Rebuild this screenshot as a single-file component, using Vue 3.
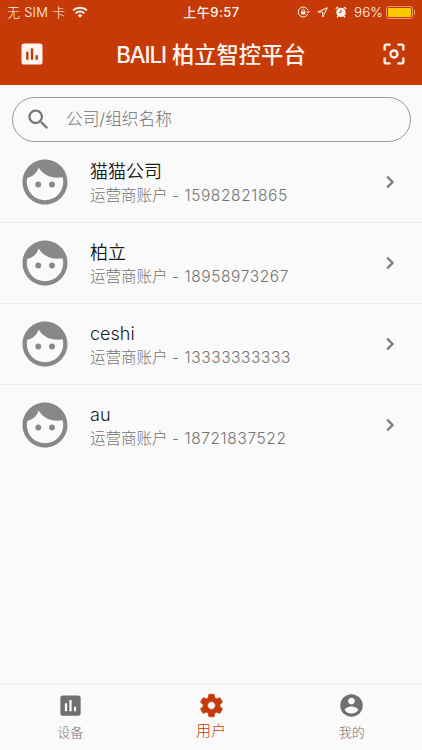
<template>
  <div class="page">
    <header class="header">
      <div class="status-bar">
        <div class="status-left">
          <span class="carrier">无 SIM 卡</span>
          <svg class="wifi" viewBox="0 0 16 12">
            <path d="M8 11.8L5.8 9.4a3.2 3.2 0 0 1 4.4 0z" fill="currentColor" />
            <path d="M3.7 7.2a6.2 6.2 0 0 1 8.6 0M1.1 4.4a10 10 0 0 1 13.8 0" fill="none" stroke="currentColor" stroke-width="2" />
          </svg>
        </div>
        <span class="time">上午9:57</span>
        <div class="status-right">
          <svg class="lock" viewBox="0 0 13 12" fill="none" stroke="currentColor">
            <path d="M10.9 7.8A5 5 0 1 1 11 4.5M9.6 5.2l1.6 1.7 1.5-1.7" />
            <path d="M5 5.6V4.4a1.2 1.2 0 0 1 2.4 0v1.2" stroke-width=".8" />
            <path d="M4 5.4h4.4v3H4z" fill="currentColor" stroke="none" />
          </svg>
          <svg class="location" viewBox="0 0 11 11" fill="none" stroke="currentColor">
            <path d="M10.3 .7L.8 5h4.9v5z" stroke-linejoin="round" />
          </svg>
          <svg class="alarm" viewBox="0 0 12 12">
            <circle cx="6" cy="6.4" r="4.7" fill="currentColor" />
            <path d="M.8 2.8L3 .9M11.2 2.8L9 .9M3 10l-1 1.4M9 10l1 1.4" stroke="currentColor" stroke-width="1.3" />
            <path d="M6 3.8v2.8H4" fill="none" stroke="#c63a08" />
          </svg>
          <span class="percent">96%</span>
          <div class="battery"><div class="level"></div></div>
        </div>
      </div>
      <div class="app-bar">
        <svg class="bar-icon" viewBox="0 0 24 24"><path :d="icons.chart" /></svg>
        <h1 class="title"><span class="brand">BAILI</span> 柏立智控平台</h1>
        <svg class="bar-icon" viewBox="0 0 24 24"><path :d="icons.scan" /></svg>
      </div>
    </header>

    <main class="content">
      <div class="search">
        <svg class="search-icon" viewBox="0 0 24 24"><path :d="icons.search" /></svg>
        <span class="placeholder">公司/组织名称</span>
      </div>

      <ul class="list">
        <li v-for="user in users" :key="user.phone" class="item">
          <svg class="avatar" viewBox="0 0 24 24"><path :d="icons.face" /></svg>
          <div class="info">
            <div class="name">{{ user.name }}</div>
            <div class="account">运营商账户 <span class="phone">- {{ user.phone }}</span></div>
          </div>
          <svg class="chevron" viewBox="0 0 24 24"><path :d="icons.chevron" /></svg>
        </li>
      </ul>
    </main>

    <nav class="tab-bar">
      <div v-for="tab in tabs" :key="tab.label" class="tab" :class="{ active: tab.label === activeTab }">
        <svg class="tab-icon" viewBox="0 0 24 24"><path :d="icons[tab.icon]" /></svg>
        <span class="tab-label">{{ tab.label }}</span>
      </div>
    </nav>
  </div>
</template>

<script setup>
import { ref } from 'vue'

const activeTab = ref('用户')

const users = [
  { name: '猫猫公司', phone: '15982821865' },
  { name: '柏立', phone: '18958973267' },
  { name: 'ceshi', phone: '13333333333' },
  { name: 'au', phone: '18721837522' }
]

const tabs = [
  { label: '设备', icon: 'chart' },
  { label: '用户', icon: 'settings' },
  { label: '我的', icon: 'account' }
]

const icons = {
  chart: 'M19 3H5c-1.1 0-2 .9-2 2v14c0 1.1.9 2 2 2h14c1.1 0 2-.9 2-2V5c0-1.1-.9-2-2-2zM9 17H7v-7h2v7zm4 0h-2V7h2v10zm4 0h-2v-4h2v4z',
  scan: 'M5 15H3v4c0 1.1.9 2 2 2h4v-2H5v-4zM5 5h4V3H5c-1.1 0-2 .9-2 2v4h2V5zm14-2h-4v2h4v4h2V5c0-1.1-.9-2-2-2zm0 16h-4v2h4c1.1 0 2-.9 2-2v-4h-2v4zM12 8c-2.21 0-4 1.79-4 4s1.79 4 4 4 4-1.79 4-4-1.79-4-4-4zm0 6c-1.1 0-2-.9-2-2s.9-2 2-2 2 .9 2 2-.9 2-2 2z',
  search: 'M15.5 14h-.79l-.28-.27C15.41 12.59 16 11.11 16 9.5 16 5.91 13.09 3 9.5 3S3 5.91 3 9.5 5.91 16 9.5 16c1.61 0 3.09-.59 4.23-1.57l.27.28v.79l5 4.99L20.49 19l-4.99-5zm-6 0C7.01 14 5 11.99 5 9.5S7.01 5 9.5 5 14 7.01 14 9.5 11.99 14 9.5 14z',
  face: 'M9 11.8a1.3 1.3 0 1 0 0 2.6 1.3 1.3 0 0 0 0-2.6zm6.1 0a1.3 1.3 0 1 0 0 2.6 1.3 1.3 0 0 0 0-2.6zM12 2C6.48 2 2 6.48 2 12s4.48 10 10 10 10-4.48 10-10S17.52 2 12 2zm0 18.1c-4.5 0-8.1-3.6-8.1-8.1 0-.6.1-1.2.2-1.8 2.6-.6 4.3-2.2 5.1-4.6 1.5 2.9 4.8 4.5 8.3 4.5.8 0 1.6-.1 2.3-.2.2.7.3 1.4.3 2.1 0 4.5-3.6 8.1-8.1 8.1z',
  chevron: 'M10 6L8.59 7.41 13.17 12l-4.58 4.59L10 18l6-6z',
  settings: 'M19.43 12.98c.04-.32.07-.64.07-.98s-.03-.66-.07-.98l2.11-1.65c.19-.15.24-.42.12-.64l-2-3.46c-.12-.22-.39-.3-.61-.22l-2.49 1c-.52-.4-1.08-.73-1.69-.98l-.38-2.65C14.46 2.18 14.25 2 14 2h-4c-.25 0-.46.18-.49.42l-.38 2.65c-.61.25-1.17.59-1.69.98l-2.49-1c-.23-.09-.49 0-.61.22l-2 3.46c-.13.22-.07.49.12.64l2.11 1.65c-.04.32-.07.65-.07.98s.03.66.07.98l-2.11 1.65c-.19.15-.24.42-.12.64l2 3.46c.12.22.39.3.61.22l2.49-1c.52.4 1.08.73 1.69.98l.38 2.65c.03.24.24.42.49.42h4c.25 0 .46-.18.49-.42l.38-2.65c.61-.25 1.17-.59 1.69-.98l2.49 1c.23.09.49 0 .61-.22l2-3.46c.12-.22.07-.49-.12-.64l-2.11-1.65zM12 15.5c-1.93 0-3.5-1.57-3.5-3.5s1.57-3.5 3.5-3.5 3.5 1.57 3.5 3.5-1.57 3.5-3.5 3.5z',
  account: 'M12 2C6.48 2 2 6.48 2 12s4.48 10 10 10 10-4.48 10-10S17.52 2 12 2zm0 3c1.66 0 3 1.34 3 3s-1.34 3-3 3-3-1.34-3-3 1.34-3 3-3zm0 14.2c-2.5 0-4.71-1.28-6-3.22.03-1.99 4-3.08 6-3.08 1.99 0 5.97 1.09 6 3.08-1.29 1.94-3.5 3.22-6 3.22z'
}
</script>

<style>
body {
  background: #fafafa;
}
</style>

<style scoped>
.page {
  display: flex;
  flex-direction: column;
  height: 750px;
  overflow: hidden;
  background: #fafafa;
  font-family: Inter, "Noto Sans CJK SC", sans-serif;
}

svg {
  display: block;
  flex-shrink: 0;
}

.header {
  height: 85px;
  flex-shrink: 0;
  background: #c63a08;
  color: #fff5ee;
}

.status-bar {
  display: grid;
  grid-template-columns: 1fr auto 1fr;
  align-items: center;
  height: 24px;
  padding: 0 6px 0 7px;
  font-size: 13px;
  line-height: 24px;
}

.status-left,
.status-right {
  display: flex;
  align-items: center;
}

.status-right {
  justify-content: flex-end;
}

.carrier {
  font-weight: 300;
  letter-spacing: 0.25px;
}

.wifi {
  width: 16px;
  height: 12px;
  margin-left: 7px;
}

.time {
  font-weight: 500;
  letter-spacing: 0.5px;
}

.lock {
  width: 13px;
  height: 12px;
}

.location {
  width: 11px;
  height: 11px;
  margin-left: 7px;
}

.alarm {
  width: 12px;
  height: 12px;
  margin-left: 7px;
}

.percent {
  margin-left: 7px;
  font-size: 13.5px;
  font-weight: 300;
}

.battery {
  position: relative;
  width: 27px;
  height: 13px;
  margin: 0 3px 0 3px;
  padding: 2px;
  box-sizing: border-box;
  border: 1px solid #e99a70;
  border-radius: 3px;
}

.battery::after {
  content: "";
  position: absolute;
  top: 3px;
  right: -3px;
  width: 1px;
  height: 5px;
  background: #e99a70;
}

.level {
  height: 100%;
  margin: -1px;
  padding: 1px 0;
  border-radius: 1px;
  background: #fdc800;
}

.app-bar {
  display: flex;
  align-items: center;
  justify-content: space-between;
  height: 60px;
  padding: 0 13.5px 0 17.5px;
}

.bar-icon {
  width: 28px;
  height: 28px;
  fill: currentColor;
}

.title {
  margin: 2px 4px 0 0;
  font-size: 22.3px;
  font-weight: 500;
  line-height: 32px;
  white-space: nowrap;
}

.brand {
  letter-spacing: -1.1px;
}

.content {
  flex: 1;
}

.search {
  display: flex;
  align-items: center;
  height: 45px;
  margin: 12px 11.5px 0;
  padding-left: 12.5px;
  box-sizing: border-box;
  border: 1px solid #999;
  border-radius: 23px;
}

.search-icon {
  width: 27px;
  height: 27px;
  fill: #777;
}

.placeholder {
  margin-left: 14px;
  padding-bottom: 1px;
  color: #707070;
  font-size: 16.7px;
  font-weight: 300;
  line-height: 24px;
}

.list {
  margin: 0;
  padding: 0;
  list-style: none;
}

.item {
  display: flex;
  align-items: center;
  height: 81px;
  padding: 0 20px 0 18px;
  box-sizing: border-box;
  border-bottom: 1px solid #ececec;
}

.item:last-child {
  border-bottom-color: transparent;
}

.avatar {
  width: 54px;
  height: 54px;
  fill: #888;
}

.info {
  flex: 1;
  margin-left: 18px;
  padding-top: 3px;
}

.name {
  color: #1a1a1a;
  font-size: 18px;
  font-weight: 350;
  line-height: 24px;
}

.account {
  color: #747474;
  font-size: 15.5px;
  font-weight: 300;
  line-height: 23px;
}

.phone {
  letter-spacing: 0.6px;
}

.chevron {
  width: 24px;
  height: 24px;
  fill: #808080;
  stroke: #808080;
  stroke-width: 0.5;
}

.tab-bar {
  display: flex;
  height: 67px;
  flex-shrink: 0;
  box-sizing: border-box;
  border-top: 2px solid #f2f2f2;
}

.tab {
  display: flex;
  flex: 1;
  flex-direction: column;
  align-items: center;
  padding-top: 7px;
  color: #707070;
}

.tab-icon {
  width: 27px;
  height: 27px;
  fill: currentColor;
}

.active .tab-icon {
  stroke: currentColor;
  stroke-width: 0.6;
}

.tab-label {
  padding-top: 1px;
  font-size: 13px;
  font-weight: 300;
  line-height: 24px;
}

.tab.active {
  color: #c63a08;
}

.active .tab-label {
  font-size: 15px;
  line-height: 22px;
}
</style>
